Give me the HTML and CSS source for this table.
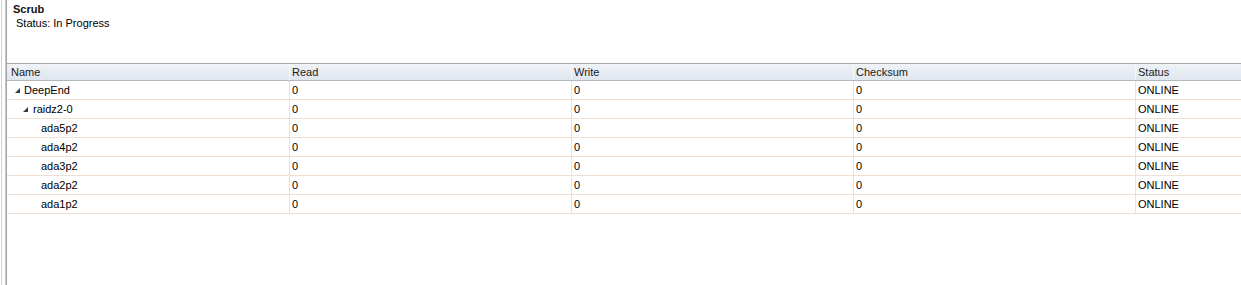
FILE: index.html
```html
<!DOCTYPE html>
<html lang="en">
<head>
<meta charset="utf-8">
<title>Scrub</title>
<link rel="stylesheet" href="styles.css">
</head>
<body>
<div class="page">
  <div class="rail-outer"></div>
  <div class="rail-inner"></div>
  <div class="panel">
    <div class="summary">
      <div class="title">Scrub</div>
      <div class="status-line">Status: In Progress</div>
    </div>
    <div class="grid">
      <div class="row head">
        <div class="cell">Name</div>
        <div class="cell">Read</div>
        <div class="cell">Write</div>
        <div class="cell">Checksum</div>
        <div class="cell">Status</div>
      </div>
      <div class="row">
        <div class="cell name lvl0"><span class="exp"><svg width="5" height="5" viewBox="0 0 5 5"><polygon points="5,0 5,5 0,5"/></svg></span>DeepEnd</div>
        <div class="cell">0</div><div class="cell">0</div><div class="cell">0</div><div class="cell">ONLINE</div>
      </div>
      <div class="row">
        <div class="cell name lvl1"><span class="exp"><svg width="5" height="5" viewBox="0 0 5 5"><polygon points="5,0 5,5 0,5"/></svg></span>raidz2-0</div>
        <div class="cell">0</div><div class="cell">0</div><div class="cell">0</div><div class="cell">ONLINE</div>
      </div>
      <div class="row">
        <div class="cell name lvl2">ada5p2</div>
        <div class="cell">0</div><div class="cell">0</div><div class="cell">0</div><div class="cell">ONLINE</div>
      </div>
      <div class="row">
        <div class="cell name lvl2">ada4p2</div>
        <div class="cell">0</div><div class="cell">0</div><div class="cell">0</div><div class="cell">ONLINE</div>
      </div>
      <div class="row">
        <div class="cell name lvl2">ada3p2</div>
        <div class="cell">0</div><div class="cell">0</div><div class="cell">0</div><div class="cell">ONLINE</div>
      </div>
      <div class="row">
        <div class="cell name lvl2">ada2p2</div>
        <div class="cell">0</div><div class="cell">0</div><div class="cell">0</div><div class="cell">ONLINE</div>
      </div>
      <div class="row">
        <div class="cell name lvl2">ada1p2</div>
        <div class="cell">0</div><div class="cell">0</div><div class="cell">0</div><div class="cell">ONLINE</div>
      </div>
    </div>
  </div>
</div>
</body>
</html>
```

FILE: styles.css
```css
html, body {
  margin: 0;
  padding: 0;
  background: #ffffff;
}
body {
  font-family: "Liberation Sans", Arial, sans-serif;
  font-size: 11px;
  color: #000000;
  overflow: hidden;
}
.page {
  display: flex;
  height: 285px;
  width: 1241px;
  overflow: hidden;
}
.rail-outer {
  width: 1px;
  margin-left: 1px;
  background: #d3d3d3;
  flex: none;
}
.rail-inner {
  width: 2px;
  margin-left: 3px;
  background: linear-gradient(to right, #c9c9c9 50%, #a3a3a3 50%);
  flex: none;
}
.panel {
  flex: 1;
  min-width: 0;
  overflow: hidden;
}
.summary {
  height: 63px;
  box-sizing: border-box;
  padding: 2px 0 0 6px;
  line-height: 14px;
}
.title {
  font-weight: bold;
  color: #111111;
}
.status-line {
  padding-left: 3px;
}
.grid {
  width: 1411px;
}
.row {
  display: grid;
  grid-template-columns: 283px 282px 282px 282px 282px;
  height: 19px;
  box-sizing: border-box;
  border-bottom: 1px solid #eee1d4;
  line-height: 18px;
}
.row.head {
  height: 18px;
  border-top: 1px solid #a8a8a8;
  border-bottom: 1px solid #b3b8bf;
  background: linear-gradient(to bottom, #f0f3f7, #dfe6ee);
  line-height: 16px;
  color: #1a1a1a;
}
.cell {
  box-sizing: border-box;
  padding-left: 2px;
  border-right: 1px solid #eee1d4;
  white-space: nowrap;
  overflow: hidden;
}
.row .cell:first-child {
  padding-left: 4px;
}
.row.head .cell {
  border-right: 1px solid #f6f8fb;
}
.name {
  display: flex;
  align-items: center;
}
.exp {
  display: inline-flex;
  width: 9px;
  flex: none;
}
.exp svg {
  display: block;
  fill: #3a3a3a;
}
.row .cell.lvl0 {
  padding-left: 8px;
}
.row .cell.lvl1 {
  padding-left: 16px;
}
.row .cell.lvl1 .exp {
  width: 10px;
}
.row .cell.lvl2 {
  padding-left: 34px;
}
```
